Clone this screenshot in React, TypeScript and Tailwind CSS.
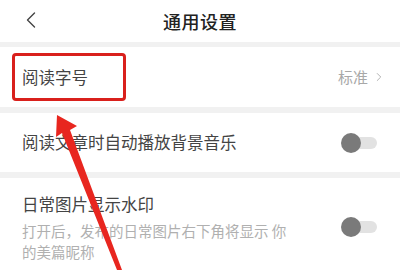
import { ChevronLeft, ChevronRight } from "lucide-react";

const font = { fontFamily: '"Noto Sans CJK SC", "Noto Sans", sans-serif' };

function Toggle() {
  return (
    <div className="relative w-[36px] h-[20px] flex items-center">
      <div className="absolute left-[4px] right-0 h-[12px] rounded-full bg-[#e2e2e2]" />
      <div className="relative w-[20px] h-[20px] rounded-full bg-[#7a7a7a]" />
    </div>
  );
}

export default function App() {
  return (
    <div className="relative w-[400px] h-[270px] overflow-hidden bg-white text-[#333]" style={font}>
      {/* Header */}
      <div className="relative h-[42px] flex items-center justify-center">
        <ChevronLeft className="absolute left-[17px] top-[6px] w-[28px] h-[28px] text-[#444]" strokeWidth={1.2} />
        <span className="text-[18px] font-medium text-[#222] tracking-[0.5px]">通用设置</span>
      </div>
      <div className="h-[5px] bg-[#f1f1f1]" />

      {/* Row 1 */}
      <div className="h-[60px] flex items-center justify-between pl-[22px] pr-[14px]">
        <span className="text-[16.5px] text-[#444]">阅读字号</span>
        <div className="flex items-center gap-[4px] text-[#a8a8a8]">
          <span className="text-[15px]">标准</span>
          <ChevronRight className="w-[14px] h-[14px]" strokeWidth={1.5} />
        </div>
      </div>
      <div className="h-[6px] bg-[#f1f1f1]" />

      {/* Row 2 */}
      <div className="h-[59px] flex items-center justify-between pl-[22px] pr-[23px]">
        <span className="text-[16.5px] text-[#444]">阅读文章时自动播放背景音乐</span>
        <Toggle />
      </div>
      <div className="h-[6px] bg-[#f1f1f1]" />

      {/* Row 3 */}
      <div className="flex items-center justify-between pl-[22px] pr-[23px] pt-[14px]">
        <div className="w-[290px]">
          <div className="text-[16.5px] text-[#444] leading-[24px]">日常图片显示水印</div>
          <div className="text-[14.5px] text-[#b0b0b0] leading-[21px] mt-[4px]">
            打开后，发布的日常图片右下角将显示 你<br />的美篇昵称
          </div>
        </div>
        <Toggle />
      </div>

      {/* Annotation overlay */}
      <div className="absolute left-[12px] top-[53px] w-[114px] h-[48px] border-[3px] border-[#d9201c] rounded-[4px]" />
      <svg className="absolute inset-0 pointer-events-none" width="400" height="270" viewBox="0 0 400 270">
        <polygon
          points="57,115 77,126 70,130 122,270 117,270 62,133 56,137"
          fill="#e8261f"
        />
      </svg>
    </div>
  );
}
